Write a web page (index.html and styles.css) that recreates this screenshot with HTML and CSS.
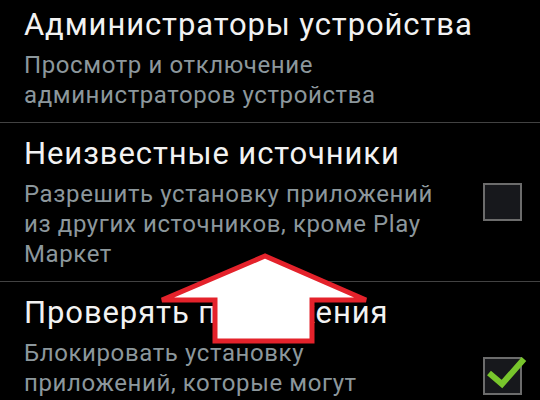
FILE: index.html
```html
<!DOCTYPE html>
<html lang="ru">
<head>
<meta charset="utf-8">
<link rel="stylesheet" href="styles.css">
</head>
<body>
<div class="screen">
  <div class="list">
    <div class="pref">
      <div class="text">
        <div class="title">Администраторы устройства</div>
        <div class="summary">Просмотр и отключение администраторов устройства</div>
      </div>
    </div>
    <div class="pref">
      <div class="text">
        <div class="title">Неизвестные источники</div>
        <div class="summary">Разрешить установку приложений из других источников, кроме Play Маркет</div>
      </div>
      <div class="checkbox"></div>
    </div>
    <div class="pref">
      <div class="text">
        <div class="title">Проверять приложения</div>
        <div class="summary">Блокировать установку приложений, которые могут нанести вред устройству, или предупреждать о них</div>
      </div>
      <div class="checkbox checked">
        <svg class="check" viewBox="0 0 40 40" width="40" height="40">
          <path d="M4 17 L17 28 L39 3" fill="none" stroke="#78c52c" stroke-width="6"/>
        </svg>
      </div>
    </div>
  </div>
  <svg class="arrow" width="540" height="400" viewBox="0 0 540 400">
    <polygon points="265,256 162,300 215,300 215,341 312,341 312,300 366,300" fill="#ffffff" stroke="#e4222b" stroke-width="5" stroke-linejoin="miter"/>
  </svg>
</div>
</body>
</html>
```

FILE: styles.css
```css
html, body {
  margin: 0;
  padding: 0;
  background: #000;
}
.screen {
  position: relative;
  width: 540px;
  height: 400px;
  overflow: hidden;
  background: #000;
  font-family: Roboto, "Noto Sans", sans-serif;
}
.list {
  margin-top: -6px;
}
.pref {
  display: flex;
  align-items: center;
  padding: 11px 18px 12px 24px;
  border-bottom: 1px solid #424242;
}
.text {
  flex: 1;
  padding-right: 34px;
}
.title {
  color: #f2f2f2;
  font-size: 31px;
  line-height: 40px;
  letter-spacing: 0.9px;
  margin-bottom: 5px;
}
.summary {
  color: #8c979c;
  font-size: 24px;
  line-height: 30px;
  letter-spacing: 0.6px;
}
.checkbox {
  position: relative;
  flex: none;
  width: 35px;
  height: 34px;
  border: 2px solid #6c6c6c;
  background: #17181c;
}
.check {
  position: absolute;
  left: 0;
  top: -3px;
  overflow: visible;
}
.arrow {
  position: absolute;
  left: 0;
  top: 0;
}
```
